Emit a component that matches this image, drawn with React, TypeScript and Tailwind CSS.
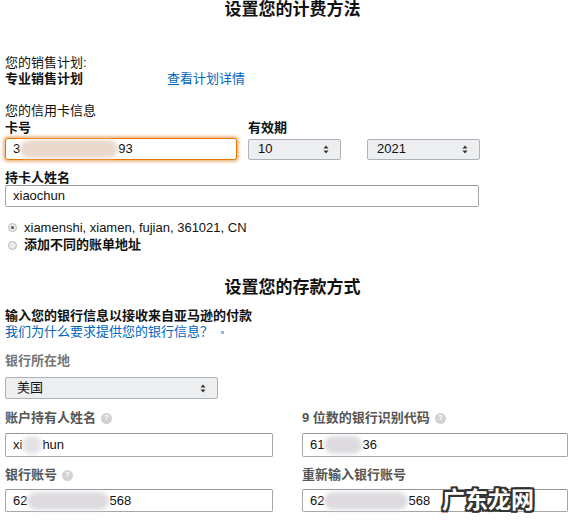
import React from 'react';

const font = { fontFamily: '"Liberation Sans", Arial, "Noto Sans CJK SC", sans-serif' };

function Arrows() {
  return (
    <svg width="6" height="9" viewBox="0 0 6 9" className="shrink-0">
      <path d="M3 0.5 L5.5 3.5 H0.5 Z" fill="#333" />
      <path d="M3 8.5 L5.5 5.5 H0.5 Z" fill="#333" />
    </svg>
  );
}

function Select({ value, className }: { value: string; className: string }) {
  return (
    <div
      className={`flex items-center justify-between rounded-[2px] border border-[#adb1b8] bg-[#eceef0] pl-[9px] pr-[11px] text-[13px] text-[#111] ${className}`}
    >
      <span>{value}</span>
      <Arrows />
    </div>
  );
}

function Help() {
  return (
    <span className="ml-[5px] inline-flex h-[11px] w-[11px] items-center justify-center rounded-full bg-[#d2d2d2] text-[8px] font-bold leading-none text-white">
      ?
    </span>
  );
}

function Blob({ w, color = 'bg-[#dedbe0]' }: { w: string; color?: string }) {
  return <span className={`inline-block h-[18px] rounded-full blur-[2px] ${w} ${color}`} />;
}

function Input({ children, className }: { children: React.ReactNode; className: string }) {
  return (
    <div
      className={`flex items-center rounded-[2px] border border-[#a6a6a6] border-t-[#949494] bg-white pl-[7px] text-[13px] text-[#111] ${className}`}
    >
      {children}
    </div>
  );
}

function Radio({ checked }: { checked?: boolean }) {
  return (
    <span className="flex h-[9px] w-[9px] items-center justify-center rounded-full border border-[#b8b8b8] bg-[#ececec]">
      {checked && <span className="h-[3px] w-[3px] rounded-full bg-[#555]" />}
    </span>
  );
}

const outline =
  '-2px -2px 0 #333, 2px -2px 0 #333, -2px 2px 0 #333, 2px 2px 0 #333, 0 -2px 0 #333, 0 2px 0 #333, -2px 0 0 #333, 2px 0 0 #333';

export default function App() {
  return (
    <div className="relative h-[529px] w-[576px] overflow-hidden bg-white text-[#111]" style={font}>
      <div className="pl-[9px] text-center text-[17px] font-bold leading-5">设置您的计费方法</div>

      <div className="px-[5px]">
        <div className="mt-[35px] text-[13px] leading-4">您的销售计划:</div>
        <div className="flex text-[13px] leading-4">
          <span className="w-[162px] font-bold">专业销售计划</span>
          <span className="text-[#0066c0]">查看计划详情</span>
        </div>

        <div className="mt-[16px] text-[13px] leading-4">您的信用卡信息</div>
        <div className="mt-[1px] flex text-[13px] font-bold leading-4">
          <span className="w-[243px]">卡号</span>
          <span>有效期</span>
        </div>
        <div className="mt-[2px] flex items-center">
          <div className="flex h-[22px] w-[232px] items-center rounded-[3px] border border-[#e77600] bg-white pl-[7px] text-[13px] shadow-[0_0_3px_2px_rgba(228,121,17,0.5)]">
            <span>3</span>
            <Blob w="w-[98px]" color="bg-[#ead8cc]" />
            <span>93</span>
          </div>
          <Select value="10" className="ml-[11px] h-[21px] w-[93px]" />
          <Select value="2021" className="ml-[26px] h-[21px] w-[113px]" />
        </div>

        <div className="mt-[10px] text-[13px] font-bold leading-[15px]">持卡人姓名</div>
        <Input className="h-[22px] w-[474px]">xiaochun</Input>

        <div className="mt-[12px] flex flex-col text-[13px]">
          <label className="flex h-[17px] items-center gap-[7px] pl-[3px]">
            <Radio checked />
            <span>xiamenshi, xiamen, fujian, 361021, CN</span>
          </label>
          <label className="flex h-[18px] items-center gap-[7px] pl-[3px] font-bold">
            <Radio />
            <span>添加不同的账单地址</span>
          </label>
        </div>
      </div>

      <div className="mt-[24px] pl-[9px] text-center text-[17px] font-bold leading-5">设置您的存款方式</div>

      <div className="px-[5px]">
        <div className="mt-[10px] text-[13px] font-bold leading-4">输入您的银行信息以接收来自亚马逊的付款</div>
        <div className="flex items-center text-[13px] leading-4 text-[#0066c0]">
          <span>我们为什么要求提供您的银行信息？</span>
          <span className="ml-[8px] h-[3px] w-[3px] bg-[#8fb6d8]" />
        </div>

        <div className="mt-[13px] text-[13px] font-bold leading-4 text-[#767676]">银行所在地</div>
        <Select value="美国" className="mt-[8px] h-[22px] w-[213px] pl-[11px]" />

        <div className="mt-[11px] grid grid-cols-[268px_266px] gap-x-[29px]">
          <div>
            <div className="flex h-4 items-center text-[13px] font-bold text-[#555]">
              账户持有人姓名
              <Help />
            </div>
            <Input className="mt-[7px] h-[24px] w-[268px]">
              <span>xi</span>
              <Blob w="w-[20px]" color="bg-[#e4e2e6]" />
              <span>hun</span>
            </Input>
            <div className="mt-[10px] flex h-4 items-center text-[13px] font-bold text-[#555]">
              银行账号
              <Help />
            </div>
            <Input className="mt-[6px] h-[23px] w-[268px]">
              <span>62</span>
              <Blob w="w-[82px]" />
              <span>568</span>
            </Input>
          </div>
          <div>
            <div className="flex h-4 items-center text-[13px] font-bold text-[#555]">
              9 位数的银行识别代码
              <Help />
            </div>
            <Input className="mt-[7px] h-[24px] w-[266px] pl-[5px]">
              <span>61</span>
              <Blob w="w-[38px]" />
              <span>36</span>
            </Input>
            <div className="mt-[10px] flex h-4 items-center text-[13px] font-bold text-[#555]">重新输入银行账号</div>
            <Input className="relative mt-[6px] h-[23px] w-[266px] pl-[5px]">
              <span>62</span>
              <Blob w="w-[84px]" />
              <span>568</span>
              <span
                className="absolute left-[139px] top-[-3px] text-[23px] font-bold leading-[26px] text-white"
                style={{ textShadow: outline }}
              >
                广东龙网
              </span>
            </Input>
          </div>
        </div>
      </div>
    </div>
  );
}
